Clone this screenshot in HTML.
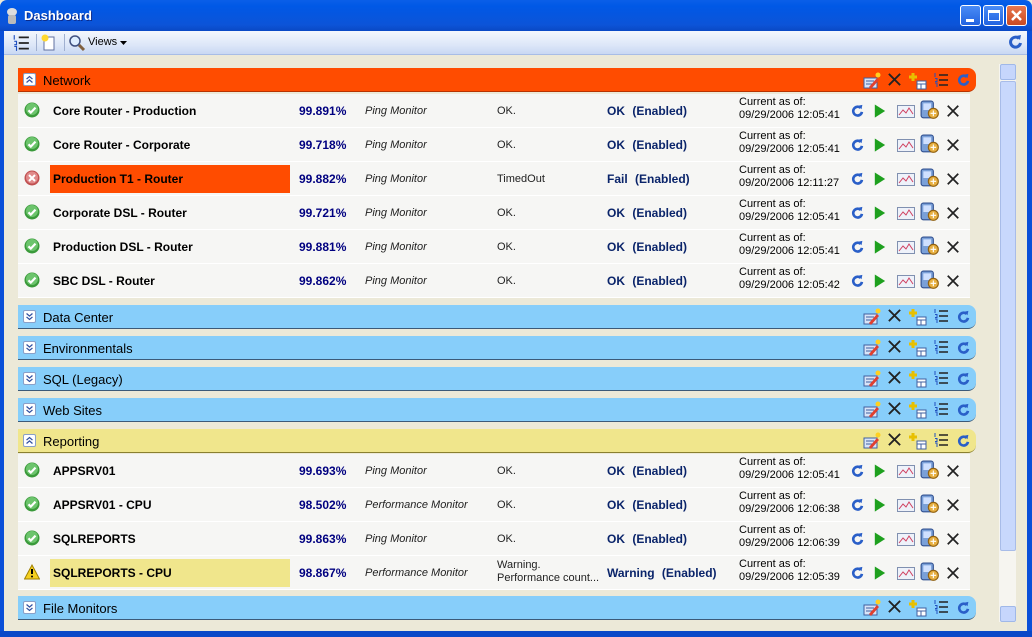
<!DOCTYPE html>
<html><head><meta charset="utf-8"><style>
*{margin:0;padding:0;box-sizing:border-box}
body{width:1032px;height:637px;overflow:hidden;position:relative;font-family:"Liberation Sans",Arial,sans-serif;background:#ece9d8}
.abs{position:absolute}
#title{left:0;top:0;width:1032px;height:31px;background:linear-gradient(#0a5fe8,#0058e6 20%,#0c54d8 80%,#0a48c4);border-radius:7px 7px 0 0}
#title span{position:absolute;left:24px;top:8px;color:#fff;font-weight:bold;font-size:13px;text-shadow:1px 1px #0a2a8a}
.wb{position:absolute;top:5px;width:21px;height:21px;border:1px solid #fff;border-radius:3px;background:linear-gradient(#4a8cf6,#2263e0)}
#lb{left:0;top:31px;width:4px;height:606px;background:#0a4fd8}
#rb{left:1027px;top:31px;width:5px;height:606px;background:#0a4fd8}
#bb{left:0;top:631px;width:1032px;height:6px;background:#0a48c8}
#tb{left:4px;top:31px;width:1023px;height:24px;background:linear-gradient(#f4f7fd,#dde7f8 60%,#c9d8f3);border-bottom:1px solid #a8bde6}
.hdr{position:absolute;left:18px;width:958px;height:24px;border-radius:0 8px 8px 0;border-bottom:1px solid #3c5a78}
.hdr .t{position:absolute;left:25px;top:5px;font-size:13px;color:#000}
.hdr .ex{position:absolute;left:5px;top:5px;width:13px;height:13px;background:#fff;border:1px solid #8aa0c8;border-radius:2px}
.blue{background:#87cefa}
.or{background:#ff4c00;border-bottom-color:#b83300}
.ye{background:#f0e68c;border-bottom-color:#8a8030}
.rows{position:absolute;left:18px;width:952px;background:#fff}
.row{position:relative;height:34px;background:#f6f6f4;border-bottom:1px solid #fff;font-size:12px}
.row div{position:absolute}
.nm{left:35px;top:10px;font-weight:bold;font-size:12px;width:240px;height:28px}
.pc{left:281px;top:10px;color:#000080;font-weight:bold;font-size:12px}
.ty{left:347px;top:11px;font-style:italic;font-size:11px;color:#222}
.st{left:479px;top:11px;font-size:11px;color:#222}
.ok{left:589px;top:10px;color:#0a246a;font-weight:bold;word-spacing:4px;font-size:12px}
.cu{left:721px;top:2px;font-size:11px;line-height:13px;color:#000}
.ri svg{position:absolute}
.hic{position:absolute}
</style></head><body>
<svg width="0" height="0" style="position:absolute">
<defs>
<symbol id="chk" viewBox="0 0 16 16"><circle cx="8" cy="8" r="7.5" fill="#3a9a3a"/><circle cx="8" cy="7" r="6" fill="#6cc46c"/><path d="M4.5 8.3l2.3 2.3 4.7-5" stroke="#fff" stroke-width="2.2" fill="none"/></symbol>
<symbol id="err" viewBox="0 0 16 16"><circle cx="8" cy="8" r="7.5" fill="#c05050"/><circle cx="8" cy="7.5" r="6" fill="#e08a8a"/><path d="M5 5l6 6M11 5l-6 6" stroke="#fff" stroke-width="2"/></symbol>
<symbol id="warn" viewBox="0 0 16 16"><path d="M8 1L15.5 15H.5z" fill="#f5d020" stroke="#a08000"/><path d="M8 5v5" stroke="#000" stroke-width="2"/><circle cx="8" cy="12.5" r="1" fill="#000"/></symbol>
<symbol id="ref" viewBox="0 0 16 16"><path d="M11 4.5A5 5 0 1 0 12.5 9" stroke="#2a5fc8" stroke-width="3" fill="none"/><path d="M8 2l5-1-1 5z" fill="#2a5fc8"/></symbol>
<symbol id="play" viewBox="0 0 16 16"><path d="M3 1l11 7-11 7z" fill="#1ea01e"/></symbol>
<symbol id="chart" viewBox="0 0 18 16"><rect x=".5" y="2.5" width="17" height="12" fill="#eef2fa" stroke="#8090b0"/><path d="M2 12l4-5 3 3 3-5 4 6" stroke="#d04060" fill="none"/></symbol>
<symbol id="pc" viewBox="0 0 18 18"><rect x="1" y="1" width="11" height="15" rx="2" fill="#7aa0d8" stroke="#305090"/><rect x="3" y="3" width="7" height="6" fill="#cfe0ff"/><circle cx="12" cy="12" r="4.5" fill="#e8b040" stroke="#906010"/><path d="M12 9.5v5M9.5 12h5" stroke="#fff"/></symbol>
<symbol id="x" viewBox="0 0 16 16"><path d="M2 2l12 12M14 2L2 14" stroke="#222" stroke-width="2"/></symbol>
<symbol id="edit" viewBox="0 0 18 18"><rect x="1" y="6" width="13" height="10" fill="#d8e4f8" stroke="#4060a0"/><path d="M3 9h8M3 12h8" stroke="#4060a0"/><path d="M6 15l8-9 2 2-8 9z" fill="#e04030"/><circle cx="15" cy="3" r="2.5" fill="#ffd020"/></symbol>
<symbol id="add" viewBox="0 0 18 18"><path d="M4 1v8M0 5h8" stroke="#e8c000" stroke-width="3"/><rect x="8" y="9" width="9" height="8" fill="#fff" stroke="#4060a0"/><path d="M8 12h9M12 12v5" stroke="#4060a0"/></symbol>
<symbol id="list" viewBox="0 0 16 16"><path d="M6 3h9M6 8h9M6 13h9" stroke="#222" stroke-width="1.5"/><path d="M2 1v4M2 6.5h2v3H2M2 11h2v4" stroke="#2050c0" fill="none"/></symbol>
<symbol id="col" viewBox="0 0 13 13"><path d="M3 6l3.5-3 3.5 3M3 10l3.5-3 3.5 3" stroke="#3050a0" stroke-width="1.5" fill="none"/></symbol>
<symbol id="exp" viewBox="0 0 13 13"><path d="M3 3l3.5 3 3.5-3M3 7l3.5 3 3.5-3" stroke="#3050a0" stroke-width="1.5" fill="none"/></symbol>
</defs></svg>

<div id="title" class="abs"><svg class="abs" style="left:5px;top:7px" width="14" height="18"><ellipse cx="7" cy="5" rx="5" ry="4" fill="#ddd"/><rect x="3" y="8" width="8" height="9" rx="2" fill="#bbb"/></svg><span>Dashboard</span>
<div class="wb" style="left:960px"><div style="position:absolute;left:5px;top:13px;width:8px;height:3px;background:#fff"></div></div>
<div class="wb" style="left:983px"><div style="position:absolute;left:4px;top:4px;width:12px;height:11px;border:1px solid #fff;border-top-width:3px"></div></div>
<div class="wb" style="left:1006px;background:linear-gradient(#e8774f,#c94a22)"><svg width="19" height="19"><path d="M5 5l9 9M14 5l-9 9" stroke="#fff" stroke-width="2.5"/></svg></div>
</div>
<div id="lb" class="abs"></div><div id="rb" class="abs"></div><div id="bb" class="abs"></div>
<div id="tb" class="abs">
<svg class="abs" style="left:8px;top:3px" width="18" height="18"><use href="#list"/></svg>
<div class="abs" style="left:32px;top:3px;width:1px;height:17px;background:#a0b0d0"></div>
<svg class="abs" style="left:36px;top:3px" width="16" height="18"><rect x="4" y="3" width="10" height="13" fill="#fff" stroke="#6070a0"/><circle cx="5" cy="4" r="3.5" fill="#ffd830"/></svg>
<div class="abs" style="left:60px;top:3px;width:1px;height:17px;background:#a0b0d0"></div>
<svg class="abs" style="left:64px;top:3px" width="18" height="18"><circle cx="7" cy="7" r="5" fill="#dfeeff" stroke="#405080" stroke-width="1.5"/><path d="M11 11l5 5" stroke="#806040" stroke-width="3"/></svg>
<span class="abs" style="left:84px;top:5px;font-size:11px">Views</span>
<svg class="abs" style="left:116px;top:10px" width="7" height="4"><path d="M0 0h7L3.5 4z" fill="#000"/></svg>
<svg class="abs" style="left:1004px;top:3px" width="16" height="16"><use href="#ref"/></svg>
</div>

<div class="abs" style="left:999px;top:64px;width:17px;height:558px;background:#f6f5f0"></div>
<div class="abs" style="left:1000px;top:64px;width:16px;height:16px;background:#c6d6fc;border:1px solid #a0b8e8;border-radius:2px"></div>
<div class="abs" style="left:1000px;top:81px;width:16px;height:470px;background:#c8d8fc;border:1px solid #a8bce8;border-radius:2px"></div>
<div class="abs" style="left:1000px;top:606px;width:16px;height:16px;background:#c6d6fc;border:1px solid #a0b8e8;border-radius:2px"></div>

<div class="hdr or" style="top:68px"><svg class="ex"><use href="#col"/></svg><span class="t">Network</span></div>
<div class="hdr blue" style="top:305px"><svg class="ex"><use href="#exp"/></svg><span class="t">Data Center</span></div>
<div class="hdr blue" style="top:336px"><svg class="ex"><use href="#exp"/></svg><span class="t">Environmentals</span></div>
<div class="hdr blue" style="top:367px"><svg class="ex"><use href="#exp"/></svg><span class="t">SQL (Legacy)</span></div>
<div class="hdr blue" style="top:398px"><svg class="ex"><use href="#exp"/></svg><span class="t">Web Sites</span></div>
<div class="hdr ye" style="top:429px"><svg class="ex"><use href="#col"/></svg><span class="t">Reporting</span></div>
<div class="hdr blue" style="top:596px"><svg class="ex"><use href="#exp"/></svg><span class="t">File Monitors</span></div>

<svg class="hic" style="left:863px;top:72px" width="18" height="18"><use href="#edit"/></svg><svg class="hic" style="left:887px;top:72px" width="15" height="15"><use href="#x"/></svg><svg class="hic" style="left:909px;top:72px" width="18" height="18"><use href="#add"/></svg><svg class="hic" style="left:933px;top:72px" width="16" height="16"><use href="#list"/></svg><svg class="hic" style="left:957px;top:73px" width="14" height="14"><use href="#ref"/></svg>
<svg class="hic" style="left:863px;top:308px" width="18" height="18"><use href="#edit"/></svg><svg class="hic" style="left:887px;top:308px" width="15" height="15"><use href="#x"/></svg><svg class="hic" style="left:909px;top:308px" width="18" height="18"><use href="#add"/></svg><svg class="hic" style="left:933px;top:308px" width="16" height="16"><use href="#list"/></svg><svg class="hic" style="left:957px;top:310px" width="14" height="14"><use href="#ref"/></svg>
<svg class="hic" style="left:863px;top:339px" width="18" height="18"><use href="#edit"/></svg><svg class="hic" style="left:887px;top:339px" width="15" height="15"><use href="#x"/></svg><svg class="hic" style="left:909px;top:339px" width="18" height="18"><use href="#add"/></svg><svg class="hic" style="left:933px;top:339px" width="16" height="16"><use href="#list"/></svg><svg class="hic" style="left:957px;top:341px" width="14" height="14"><use href="#ref"/></svg>
<svg class="hic" style="left:863px;top:370px" width="18" height="18"><use href="#edit"/></svg><svg class="hic" style="left:887px;top:370px" width="15" height="15"><use href="#x"/></svg><svg class="hic" style="left:909px;top:370px" width="18" height="18"><use href="#add"/></svg><svg class="hic" style="left:933px;top:370px" width="16" height="16"><use href="#list"/></svg><svg class="hic" style="left:957px;top:372px" width="14" height="14"><use href="#ref"/></svg>
<svg class="hic" style="left:863px;top:401px" width="18" height="18"><use href="#edit"/></svg><svg class="hic" style="left:887px;top:401px" width="15" height="15"><use href="#x"/></svg><svg class="hic" style="left:909px;top:401px" width="18" height="18"><use href="#add"/></svg><svg class="hic" style="left:933px;top:401px" width="16" height="16"><use href="#list"/></svg><svg class="hic" style="left:957px;top:403px" width="14" height="14"><use href="#ref"/></svg>
<svg class="hic" style="left:863px;top:432px" width="18" height="18"><use href="#edit"/></svg><svg class="hic" style="left:887px;top:432px" width="15" height="15"><use href="#x"/></svg><svg class="hic" style="left:909px;top:432px" width="18" height="18"><use href="#add"/></svg><svg class="hic" style="left:933px;top:432px" width="16" height="16"><use href="#list"/></svg><svg class="hic" style="left:957px;top:434px" width="14" height="14"><use href="#ref"/></svg>
<svg class="hic" style="left:863px;top:599px" width="18" height="18"><use href="#edit"/></svg><svg class="hic" style="left:887px;top:599px" width="15" height="15"><use href="#x"/></svg><svg class="hic" style="left:909px;top:599px" width="18" height="18"><use href="#add"/></svg><svg class="hic" style="left:933px;top:599px" width="16" height="16"><use href="#list"/></svg><svg class="hic" style="left:957px;top:601px" width="14" height="14"><use href="#ref"/></svg>

<div class="rows" style="top:94px">
<div class="row"><svg class="abs" style="left:6px;top:8px" width="16" height="16"><use href="#chk"/></svg><div class="nm">Core Router - Production</div><div class="pc">99.891%</div><div class="ty">Ping Monitor</div><div class="st">OK.</div><div class="ok">OK (Enabled)</div><div class="cu">Current as of:<br>09/29/2006 12:05:41</div><div class="ri"><svg style="left:833px;top:10px" width="14" height="14"><use href="#ref"/></svg><svg style="left:854px;top:9px" width="15" height="16"><use href="#play"/></svg><svg style="left:879px;top:9px" width="18" height="16"><use href="#chart"/></svg><svg style="left:902px;top:6px" width="20" height="20"><use href="#pc"/></svg><svg style="left:928px;top:10px" width="14" height="14"><use href="#x"/></svg></div></div>
<div class="row"><svg class="abs" style="left:6px;top:8px" width="16" height="16"><use href="#chk"/></svg><div class="nm">Core Router - Corporate</div><div class="pc">99.718%</div><div class="ty">Ping Monitor</div><div class="st">OK.</div><div class="ok">OK (Enabled)</div><div class="cu">Current as of:<br>09/29/2006 12:05:41</div><div class="ri"><svg style="left:833px;top:10px" width="14" height="14"><use href="#ref"/></svg><svg style="left:854px;top:9px" width="15" height="16"><use href="#play"/></svg><svg style="left:879px;top:9px" width="18" height="16"><use href="#chart"/></svg><svg style="left:902px;top:6px" width="20" height="20"><use href="#pc"/></svg><svg style="left:928px;top:10px" width="14" height="14"><use href="#x"/></svg></div></div>
<div class="row"><svg class="abs" style="left:6px;top:8px" width="16" height="16"><use href="#err"/></svg><div class="nm" style="left:32px;top:3px;width:240px;background:#ff4c00;padding:7px 0 0 3px">Production T1 - Router</div><div class="pc">99.882%</div><div class="ty">Ping Monitor</div><div class="st">TimedOut</div><div class="ok">Fail (Enabled)</div><div class="cu">Current as of:<br>09/20/2006 12:11:27</div><div class="ri"><svg style="left:833px;top:10px" width="14" height="14"><use href="#ref"/></svg><svg style="left:854px;top:9px" width="15" height="16"><use href="#play"/></svg><svg style="left:879px;top:9px" width="18" height="16"><use href="#chart"/></svg><svg style="left:902px;top:6px" width="20" height="20"><use href="#pc"/></svg><svg style="left:928px;top:10px" width="14" height="14"><use href="#x"/></svg></div></div>
<div class="row"><svg class="abs" style="left:6px;top:8px" width="16" height="16"><use href="#chk"/></svg><div class="nm">Corporate DSL - Router</div><div class="pc">99.721%</div><div class="ty">Ping Monitor</div><div class="st">OK.</div><div class="ok">OK (Enabled)</div><div class="cu">Current as of:<br>09/29/2006 12:05:41</div><div class="ri"><svg style="left:833px;top:10px" width="14" height="14"><use href="#ref"/></svg><svg style="left:854px;top:9px" width="15" height="16"><use href="#play"/></svg><svg style="left:879px;top:9px" width="18" height="16"><use href="#chart"/></svg><svg style="left:902px;top:6px" width="20" height="20"><use href="#pc"/></svg><svg style="left:928px;top:10px" width="14" height="14"><use href="#x"/></svg></div></div>
<div class="row"><svg class="abs" style="left:6px;top:8px" width="16" height="16"><use href="#chk"/></svg><div class="nm">Production DSL - Router</div><div class="pc">99.881%</div><div class="ty">Ping Monitor</div><div class="st">OK.</div><div class="ok">OK (Enabled)</div><div class="cu">Current as of:<br>09/29/2006 12:05:41</div><div class="ri"><svg style="left:833px;top:10px" width="14" height="14"><use href="#ref"/></svg><svg style="left:854px;top:9px" width="15" height="16"><use href="#play"/></svg><svg style="left:879px;top:9px" width="18" height="16"><use href="#chart"/></svg><svg style="left:902px;top:6px" width="20" height="20"><use href="#pc"/></svg><svg style="left:928px;top:10px" width="14" height="14"><use href="#x"/></svg></div></div>
<div class="row"><svg class="abs" style="left:6px;top:8px" width="16" height="16"><use href="#chk"/></svg><div class="nm">SBC DSL - Router</div><div class="pc">99.862%</div><div class="ty">Ping Monitor</div><div class="st">OK.</div><div class="ok">OK (Enabled)</div><div class="cu">Current as of:<br>09/29/2006 12:05:42</div><div class="ri"><svg style="left:833px;top:10px" width="14" height="14"><use href="#ref"/></svg><svg style="left:854px;top:9px" width="15" height="16"><use href="#play"/></svg><svg style="left:879px;top:9px" width="18" height="16"><use href="#chart"/></svg><svg style="left:902px;top:6px" width="20" height="20"><use href="#pc"/></svg><svg style="left:928px;top:10px" width="14" height="14"><use href="#x"/></svg></div></div>
</div>

<div class="rows" style="top:454px">
<div class="row"><svg class="abs" style="left:6px;top:8px" width="16" height="16"><use href="#chk"/></svg><div class="nm">APPSRV01</div><div class="pc">99.693%</div><div class="ty">Ping Monitor</div><div class="st">OK.</div><div class="ok">OK (Enabled)</div><div class="cu">Current as of:<br>09/29/2006 12:05:41</div><div class="ri"><svg style="left:833px;top:10px" width="14" height="14"><use href="#ref"/></svg><svg style="left:854px;top:9px" width="15" height="16"><use href="#play"/></svg><svg style="left:879px;top:9px" width="18" height="16"><use href="#chart"/></svg><svg style="left:902px;top:6px" width="20" height="20"><use href="#pc"/></svg><svg style="left:928px;top:10px" width="14" height="14"><use href="#x"/></svg></div></div>
<div class="row"><svg class="abs" style="left:6px;top:8px" width="16" height="16"><use href="#chk"/></svg><div class="nm">APPSRV01 - CPU</div><div class="pc">98.502%</div><div class="ty">Performance Monitor</div><div class="st">OK.</div><div class="ok">OK (Enabled)</div><div class="cu">Current as of:<br>09/29/2006 12:06:38</div><div class="ri"><svg style="left:833px;top:10px" width="14" height="14"><use href="#ref"/></svg><svg style="left:854px;top:9px" width="15" height="16"><use href="#play"/></svg><svg style="left:879px;top:9px" width="18" height="16"><use href="#chart"/></svg><svg style="left:902px;top:6px" width="20" height="20"><use href="#pc"/></svg><svg style="left:928px;top:10px" width="14" height="14"><use href="#x"/></svg></div></div>
<div class="row"><svg class="abs" style="left:6px;top:8px" width="16" height="16"><use href="#chk"/></svg><div class="nm">SQLREPORTS</div><div class="pc">99.863%</div><div class="ty">Ping Monitor</div><div class="st">OK.</div><div class="ok">OK (Enabled)</div><div class="cu">Current as of:<br>09/29/2006 12:06:39</div><div class="ri"><svg style="left:833px;top:10px" width="14" height="14"><use href="#ref"/></svg><svg style="left:854px;top:9px" width="15" height="16"><use href="#play"/></svg><svg style="left:879px;top:9px" width="18" height="16"><use href="#chart"/></svg><svg style="left:902px;top:6px" width="20" height="20"><use href="#pc"/></svg><svg style="left:928px;top:10px" width="14" height="14"><use href="#x"/></svg></div></div>
<div class="row"><svg class="abs" style="left:6px;top:8px" width="16" height="16"><use href="#warn"/></svg><div class="nm" style="left:32px;top:3px;width:240px;background:#f0e68c;padding:7px 0 0 3px">SQLREPORTS - CPU</div><div class="pc">98.867%</div><div class="ty">Performance Monitor</div><div class="st" style="top:3px;line-height:13px">Warning.<br>Performance count...</div><div class="ok">Warning (Enabled)</div><div class="cu">Current as of:<br>09/29/2006 12:05:39</div><div class="ri"><svg style="left:833px;top:10px" width="14" height="14"><use href="#ref"/></svg><svg style="left:854px;top:9px" width="15" height="16"><use href="#play"/></svg><svg style="left:879px;top:9px" width="18" height="16"><use href="#chart"/></svg><svg style="left:902px;top:6px" width="20" height="20"><use href="#pc"/></svg><svg style="left:928px;top:10px" width="14" height="14"><use href="#x"/></svg></div></div>
</div>
</body></html>
